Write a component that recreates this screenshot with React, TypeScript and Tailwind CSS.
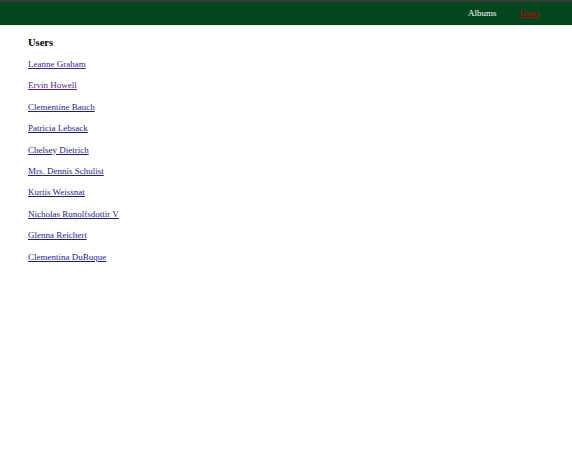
const users = [
  'Leanne Graham',
  'Ervin Howell',
  'Clementine Bauch',
  'Patricia Lebsack',
  'Chelsey Dietrich',
  'Mrs. Dennis Schulist',
  'Kurtis Weissnat',
  'Nicholas Runolfsdottir V',
  'Glenna Reichert',
  'Clementina DuBuque',
]

const linkColor = (i: number) => {
  if (i === 0) return 'text-[#3b22a6] decoration-[#3b22a6]'
  if (i === 1) return 'text-[#5b1f8e] decoration-[#5b1f8e]'
  return 'text-[#1a1aa8] decoration-[#1a1aa8]'
}

export default function App() {
  return (
    <div className="min-h-[470px] bg-white font-['Liberation_Serif',serif]">
      <nav className="h-[25px] bg-[#04461d] border-t-2 border-[#3a3a3a] flex items-center justify-end pr-[32px] gap-[23px] text-[9px]">
        <a href="#" className="text-white">Albums</a>
        <a href="#" className="text-[#c40000] underline">Users</a>
      </nav>
      <div className="h-px bg-[#e8ece8]" />
      <main className="pl-[28px] pt-[10px]">
        <h2 className="text-[10.5px] font-bold text-black leading-[13px]">Users</h2>
        <ul className="mt-[2px] flex flex-col">
          {users.map((u, i) => (
            <li key={u} className="leading-[21.4px] h-[21.4px]">
              <a href="#" className={`text-[9px] underline ${linkColor(i)}`}>{u}</a>
            </li>
          ))}
        </ul>
      </main>
    </div>
  )
}
